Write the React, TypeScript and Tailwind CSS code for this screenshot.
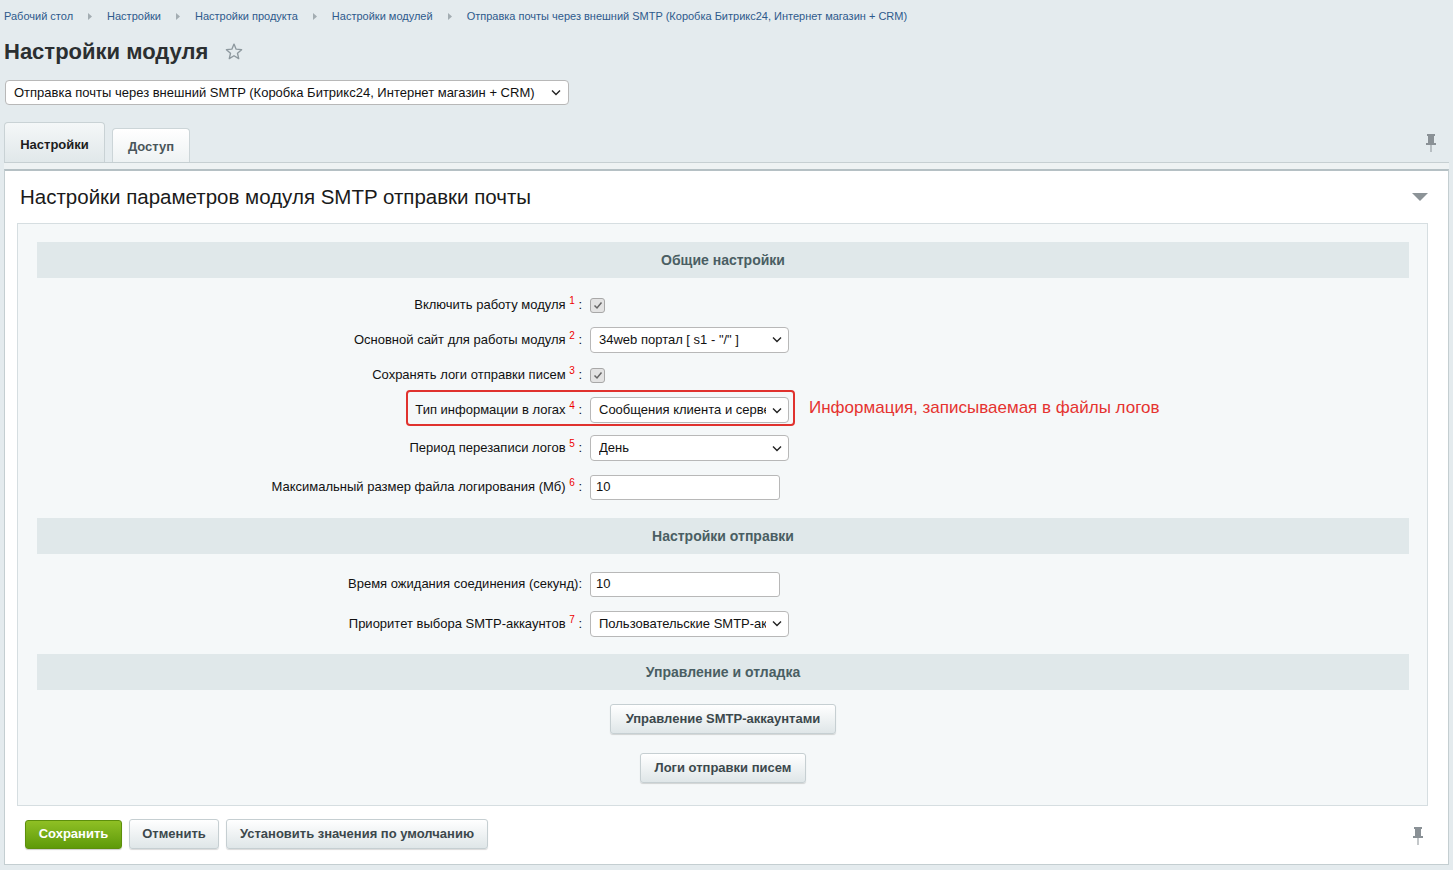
import React from "react";

const font = { fontFamily: '"Liberation Sans", Arial, sans-serif' };

const Chevron = () => (
  <svg width="10" height="7" viewBox="0 0 10 7" className="ml-[6px] shrink-0">
    <path d="M1 1.5 L5 5.5 L9 1.5" fill="none" stroke="#222" strokeWidth="1.4" />
  </svg>
);

const Pin = () => (
  <svg width="12" height="18" viewBox="0 0 12 18">
    <rect x="2" y="0" width="8" height="2" fill="#8a9196" />
    <rect x="3" y="2" width="6" height="7" fill="#8a9196" />
    <rect x="1" y="9" width="10" height="2" fill="#8a9196" />
    <rect x="5.5" y="11" width="1" height="7" fill="#8a9196" />
  </svg>
);

const Checkbox = () => (
  <span className="inline-flex h-[15px] w-[15px] items-center justify-center rounded-[3px] border border-[#a8a8a8] bg-[#e3e3e3]">
    <svg width="10" height="9" viewBox="0 0 10 9">
      <path d="M1.5 4.5 L4 7 L8.5 1.5" fill="none" stroke="#666" strokeWidth="1.5" />
    </svg>
  </span>
);

const Select = ({ value }: { value: string }) => (
  <div className="flex h-[26px] w-[199px] items-center justify-between rounded-[4px] border border-[#b8b8b8] bg-white pl-[8px] pr-[6px] text-[13px] text-[#111]">
    <span className="min-w-0 flex-1 overflow-hidden whitespace-nowrap">{value}</span>
    <Chevron />
  </div>
);

const Input = ({ value }: { value: string }) => (
  <div className="flex h-[25px] w-[190px] items-center rounded-[3px] border border-[#b8b8b8] bg-white pl-[5px] text-[13px] text-[#111]">
    {value}
  </div>
);

const Label = ({ text, n }: { text: string; n?: number }) => (
  <div className="w-[546px] shrink-0 pr-[1px] text-right text-[13px] text-[#111]">
    {text}
    {n !== undefined ? (
      <>
        {" "}
        <sup className="text-[10px] text-[#e00]">{n}</sup> :
      </>
    ) : (
      ":"
    )}
  </div>
);

const Row = ({ h, children }: { h: string; children: React.ReactNode }) => (
  <div className={`relative flex items-center ${h}`}>{children}</div>
);

const SectionHead = ({ title }: { title: string }) => (
  <div className="flex h-[36px] items-center justify-center bg-[#e0e8ea] text-[14px] font-bold text-[#4a5e63]">
    {title}
  </div>
);

const Button = ({ children, cls = "" }: { children: React.ReactNode; cls?: string }) => (
  <div
    className={`flex h-[30px] items-center justify-center rounded-[3px] border border-[#c6cfd2] bg-gradient-to-b from-[#ffffff] to-[#dfe6e8] text-[13px] font-bold text-[#3c484c] shadow-[0_1px_1px_rgba(0,0,0,0.15)] ${cls}`}
  >
    {children}
  </div>
);

const crumbs = [
  "Рабочий стол",
  "Настройки",
  "Настройки продукта",
  "Настройки модулей",
  "Отправка почты через внешний SMTP (Коробка Битрикс24, Интернет магазин + CRM)",
];

export default function App() {
  return (
    <div style={font} className="min-h-[870px] w-[1453px] bg-[#e4ebee] pl-[4px] pr-[4px]">
      {/* breadcrumbs */}
      <div className="flex h-[32px] items-center text-[11px] text-[#2e5a8c]">
        {crumbs.map((c, i) => (
          <React.Fragment key={c}>
            {i > 0 && (
              <svg width="4" height="7" viewBox="0 0 4 7" className="mx-[15px]">
                <path d="M0 0 L4 3.5 L0 7 Z" fill="#a3adb2" />
              </svg>
            )}
            <span>{c}</span>
          </React.Fragment>
        ))}
      </div>

      {/* title */}
      <div className="flex h-[39px] items-center">
        <h1 className="text-[22px] font-bold text-[#2b2f31]">Настройки модуля</h1>
        <svg width="18" height="17" viewBox="0 0 24 23" className="ml-[17px]">
          <path
            d="M12 1.5 L14.9 8.4 L22.3 9 L16.7 13.9 L18.4 21.2 L12 17.3 L5.6 21.2 L7.3 13.9 L1.7 9 L9.1 8.4 Z"
            fill="none"
            stroke="#8d989e"
            strokeWidth="1.8"
            strokeLinejoin="round"
          />
        </svg>
      </div>

      {/* module select */}
      <div className="mt-[9px] ml-[1px] flex h-[25px] w-[564px] items-center justify-between rounded-[4px] border border-[#b8b8b8] bg-white pl-[8px] pr-[7px] text-[13px] text-[#111]">
        <span>Отправка почты через внешний SMTP (Коробка Битрикс24, Интернет магазин + CRM)</span>
        <Chevron />
      </div>

      {/* tabs */}
      <div className="mt-[17px] flex items-end justify-between">
        <div className="flex items-end gap-[7px]">
          <div className="flex h-[40px] w-[101px] items-center justify-center rounded-t-[4px] border border-b-0 border-[#c9d2d5] bg-gradient-to-b from-[#f4f7f8] to-[#e1e8ea] pt-[4px] text-[13px] font-bold text-[#1c1c1c]">
            Настройки
          </div>
          <div className="flex h-[34px] w-[78px] items-center justify-center rounded-t-[4px] border border-b-0 border-[#ccd5d8] bg-gradient-to-b from-[#ffffff] to-[#eef2f3] pt-[3px] text-[13px] font-bold text-[#4a565b]">
            Доступ
          </div>
        </div>
        <div className="mb-[10px] mr-[12px]">
          <Pin />
        </div>
      </div>
      <div className="h-[7px] border-t border-[#c6cfd2] bg-[#eef2f3]" />

      {/* panel */}
      <div className="border border-t-[2px] border-[#c4ced1] border-t-[#b5c0c4] bg-white pb-[15px] pl-[12px] pr-[20px]">
        <div className="flex h-[52px] items-center justify-between pl-[3px]">
          <span className="text-[20.5px] text-[#1a1a1a]">Настройки параметров модуля SMTP отправки почты</span>
          <svg width="16" height="8" viewBox="0 0 16 8">
            <path d="M0 0 L16 0 L8 8 Z" fill="#8c9397" />
          </svg>
        </div>

        {/* inner box */}
        <div className="border border-[#d6dee1] bg-[#f5f8f9] pb-[22px] pl-[19px] pr-[18px] pt-[18px]">
          <SectionHead title="Общие настройки" />
          <div className="pb-[12px] pt-[10px]">
            <Row h="h-[34px]">
              <Label text="Включить работу модуля" n={1} />
              <div className="pl-[7px]">
                <Checkbox />
              </div>
            </Row>
            <Row h="h-[35px]">
              <Label text="Основной сайт для работы модуля" n={2} />
              <div className="pl-[7px]">
                <Select value={'34web портал [ s1 - "/" ]'} />
              </div>
            </Row>
            <Row h="h-[35px]">
              <Label text="Сохранять логи отправки писем" n={3} />
              <div className="pl-[7px]">
                <Checkbox />
              </div>
            </Row>
            <Row h="h-[36px]">
              <div className="absolute left-[369px] top-[-2px] h-[36px] w-[389px] rounded-[4px] border-2 border-[#e0322e]" />
              <Label text="Тип информации в логах" n={4} />
              <div className="pl-[7px]">
                <Select value="Сообщения клиента и сервера" />
              </div>
              <span className="ml-[20px] mt-[-4px] text-[17px] text-[#e53330]">
                Информация, записываемая в файлы логов
              </span>
            </Row>
            <Row h="h-[40px]">
              <Label text="Период перезаписи логов" n={5} />
              <div className="pl-[7px]">
                <Select value="День" />
              </div>
            </Row>
            <Row h="h-[38px]">
              <Label text="Максимальный размер файла логирования (Мб)" n={6} />
              <div className="pl-[7px]">
                <Input value="10" />
              </div>
            </Row>
          </div>

          <SectionHead title="Настройки отправки" />
          <div className="pb-[11px] pt-[10px]">
            <Row h="h-[40px]">
              <Label text="Время ожидания соединения (секунд)" />
              <div className="pl-[7px]">
                <Input value="10" />
              </div>
            </Row>
            <Row h="h-[39px]">
              <Label text="Приоритет выбора SMTP-аккаунтов" n={7} />
              <div className="pl-[7px]">
                <Select value="Пользовательские SMTP-аккаунты" />
              </div>
            </Row>
          </div>

          <SectionHead title="Управление и отладка" />
          <div className="flex flex-col items-center gap-[19px] pt-[14px]">
            <Button cls="w-[226px]">Управление SMTP-аккаунтами</Button>
            <Button cls="w-[166px]">Логи отправки писем</Button>
          </div>
        </div>

        {/* footer buttons */}
        <div className="mt-[13px] flex items-center justify-between pl-[8px]">
          <div className="flex items-center gap-[7px]">
            <div className="flex h-[29px] w-[97px] items-center justify-center rounded-[3px] border border-[#5d8f0c] bg-gradient-to-b from-[#8fc024] to-[#5e9a08] text-[13px] font-bold text-white shadow-[0_1px_1px_rgba(0,0,0,0.2)]">
              Сохранить
            </div>
            <Button cls="w-[90px]">Отменить</Button>
            <Button cls="w-[262px]">Установить значения по умолчанию</Button>
          </div>
          <div className="mr-[4px] mt-[4px]">
            <Pin />
          </div>
        </div>
      </div>
    </div>
  );
}
